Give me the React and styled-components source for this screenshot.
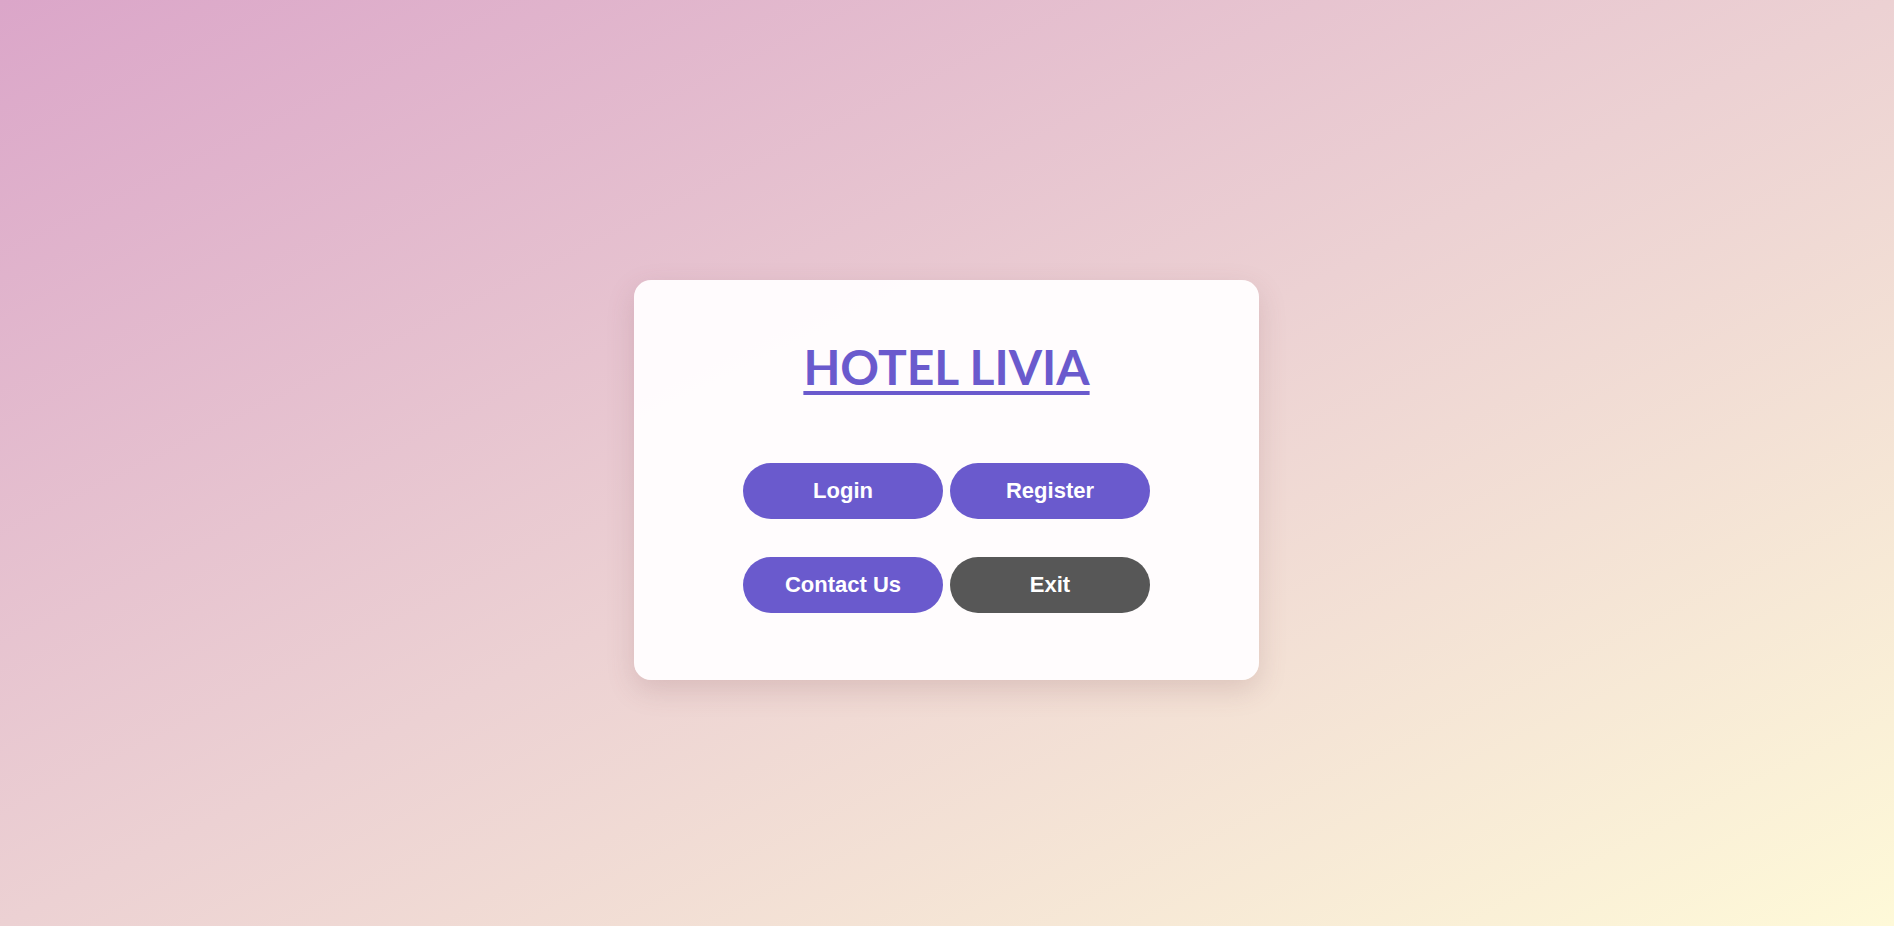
import React from "react";
import styled, { createGlobalStyle } from "styled-components";

const GlobalStyle = createGlobalStyle`
  html, body {
    margin: 0;
    padding: 0;
    height: 100%;
  }
  body {
    font-family: "Liberation Sans", Arial, sans-serif;
    background: linear-gradient(to bottom right, #dba6c9 0%, #ecd1d3 50%, #fef9d8 100%);
    background-attachment: fixed;
    min-height: 100vh;
  }
`;

const Page = styled.main`
  box-sizing: border-box;
  height: 100vh;
  display: flex;
  justify-content: center;
  align-items: flex-start;
  padding: 280px 1px 0 0;
`;

const Card = styled.section`
  box-sizing: border-box;
  width: 625px;
  height: 400px;
  background: rgba(255, 253, 254, 0.97);
  border-radius: 17px;
  box-shadow: 0 10px 28px rgba(120, 70, 80, 0.18);
  display: flex;
  flex-direction: column;
  align-items: center;
  padding-top: 58px;
`;

const Title = styled.h1`
  margin: 0;
  font-family: Lato, "Open Sans", sans-serif;
  font-weight: 700;
  font-size: 48px;
  line-height: 58px;
  color: #6a5acd;
  text-decoration: underline;
  text-decoration-thickness: 4px;
  text-underline-offset: 6px;
`;

const ButtonGrid = styled.div`
  margin-top: 67px;
  display: grid;
  grid-template-columns: 200px 200px;
  column-gap: 7px;
  row-gap: 38px;
`;

const Button = styled.button`
  height: 56px;
  border: none;
  border-radius: 28px;
  background: ${(p) => (p.$variant === "dark" ? "#575757" : "#6a5acd")};
  color: #ffffff;
  font-family: "Liberation Sans", Arial, sans-serif;
  font-weight: 700;
  font-size: 22px;
  cursor: pointer;
  padding: 0;
`;

export default function App() {
  return (
    <>
      <GlobalStyle />
      <Page>
        <Card>
          <Title>HOTEL LIVIA</Title>
          <ButtonGrid>
            <Button>Login</Button>
            <Button>Register</Button>
            <Button>Contact Us</Button>
            <Button $variant="dark">Exit</Button>
          </ButtonGrid>
        </Card>
      </Page>
    </>
  );
}
